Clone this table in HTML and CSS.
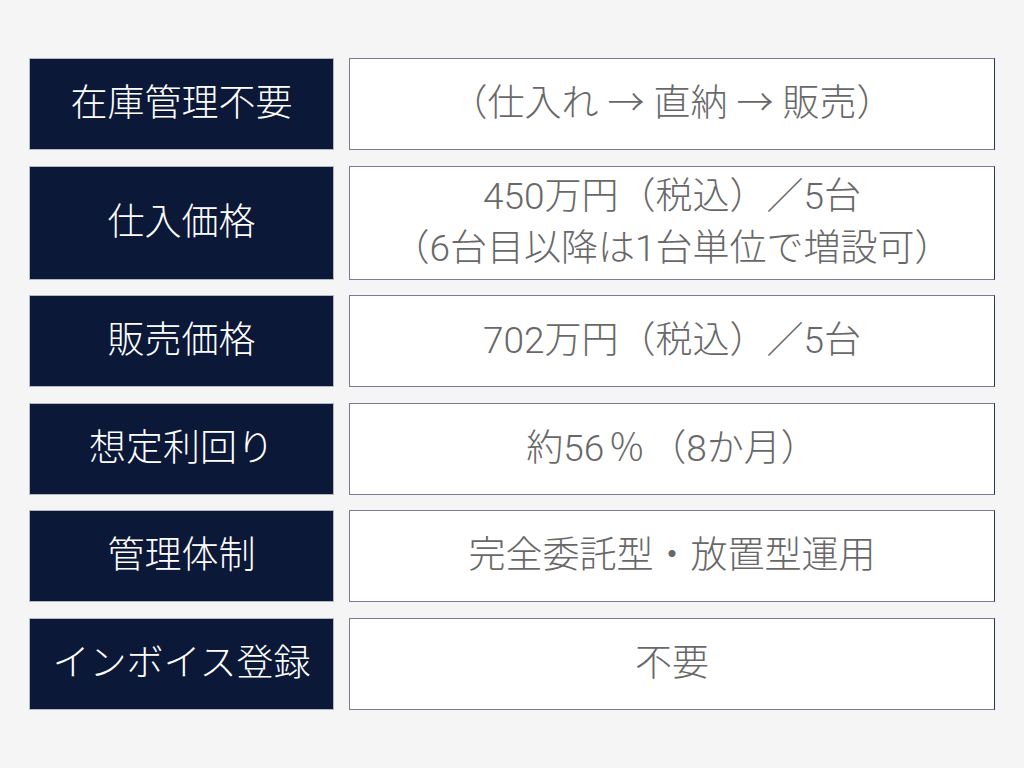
FILE: index.html
```html
<!DOCTYPE html>
<html lang="ja">
<head>
<meta charset="utf-8">
<link rel="stylesheet" href="styles.css">
</head>
<body>
<div class="table">
  <div class="label">在庫管理不要</div>
  <div class="value">（仕入れ → 直納 → 販売）</div>
  <div class="label">仕入価格</div>
  <div class="value">450万円（税込）／5台<br>（6台目以降は1台単位で増設可）</div>
  <div class="label">販売価格</div>
  <div class="value">702万円（税込）／5台</div>
  <div class="label">想定利回り</div>
  <div class="value">約56<span class="pct">％</span>（8か月）</div>
  <div class="label">管理体制</div>
  <div class="value">完全委託型・放置型運用</div>
  <div class="label">インボイス登録</div>
  <div class="value">不要</div>
</div>
</body>
</html>
```
FILE: styles.css
```css
html, body {
  margin: 0;
  padding: 0;
  background: #f5f5f5;
}
body {
  font-family: Roboto, "Noto Sans CJK JP", sans-serif;
}
.table {
  display: grid;
  grid-template-columns: 305px 646px;
  column-gap: 15px;
  row-gap: 15.6px;
  padding: 58px 0 0 29px;
}
.label,
.value {
  box-sizing: border-box;
  min-height: 92px;
  display: flex;
  align-items: center;
  justify-content: center;
  text-align: center;
  font-size: 37px;
  line-height: 52px;
  font-weight: 300;
}
.label {
  background: #0b1838;
  border: 1px solid #b4b8c4;
  color: #ffffff;
}
.value {
  background: #ffffff;
  border: 1px solid #767c93;
  border-right-color: #2a3454;
  color: #686868;
  padding: 4px 16px;
}
.pct {
  padding: 0 4px;
}
```
